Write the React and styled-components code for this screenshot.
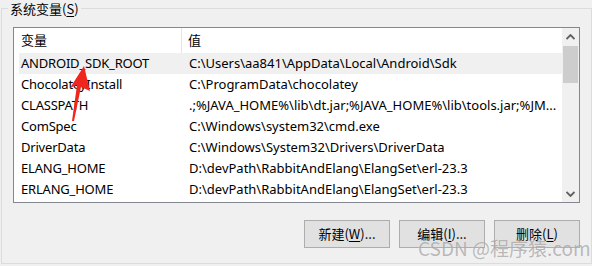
import React from "react";
import styled, { createGlobalStyle } from "styled-components";

const Global = createGlobalStyle`
  html, body { margin: 0; padding: 0; background: #f0f0f0; }
  body {
    width: 592px; height: 266px; overflow: hidden;
    font-family: "Noto Sans", "Noto Sans CJK SC", sans-serif;
    font-size: 13px; color: #000;
  }
`;

const Page = styled.div`
  position: relative;
  width: 592px;
  height: 266px;
  padding: 8px 0 0 1px;
  box-sizing: border-box;
`;

const Group = styled.div`
  position: relative;
  width: 591px;
  height: 256px;
  box-sizing: border-box;
  border: 1px solid #dcdcdc;
  padding: 18px 11px 0 11px;
  display: flex;
  flex-direction: column;
`;

const Legend = styled.div`
  position: absolute;
  left: 6px;
  top: -9px;
  padding: 0 2px;
  background: #f0f0f0;
  line-height: 17px;
  font-family: "Noto Sans CJK SC", sans-serif;
`;

const U = styled.span`
  text-decoration: underline;
  text-underline-offset: 2px;
`;

const ListBox = styled.div`
  height: 176px;
  box-sizing: border-box;
  border: 1px solid #828790;
  background: #fff;
  display: flex;
  overflow: hidden;
`;

const Content = styled.div`
  flex: 1;
  padding-left: 5px;
  display: flex;
  flex-direction: column;
  overflow: hidden;
`;

const HeaderRow = styled.div`
  height: 25px;
  flex: none;
  display: grid;
  grid-template-columns: 163px 1fr;
`;

const HeaderCell = styled.div`
  display: flex;
  align-items: center;
  padding-left: ${(p) => p.$pad}px;
  padding-bottom: 3px;
  border-right: ${(p) => (p.$divider ? "1px solid #e5e5e5" : "none")};
  font-family: "Noto Sans CJK SC", sans-serif;
`;

const Row = styled.div`
  height: 21px;
  flex: none;
  display: grid;
  grid-template-columns: 164px 1fr;
  background: ${(p) => (p.$selected ? "#f0f0f0" : "transparent")};
`;

const Cell = styled.div`
  display: flex;
  align-items: center;
  padding-left: ${(p) => p.$pad}px;
  padding-bottom: 1px;
  white-space: nowrap;
  overflow: hidden;
  letter-spacing: ${(p) => p.$ls || 0}px;
`;

const Scrollbar = styled.div`
  width: 17px;
  flex: none;
  background: #f0f0f0;
  display: flex;
  flex-direction: column;
  align-items: center;
`;

const ArrowBtn = styled.div`
  height: 17px;
  width: 17px;
  flex: none;
  display: flex;
  align-items: center;
  justify-content: center;
`;

const Thumb = styled.div`
  width: 15px;
  height: 37px;
  margin-top: 1px;
  background: #cdcdcd;
`;

const Track = styled.div`
  flex: 1;
`;

const Buttons = styled.div`
  display: flex;
  justify-content: flex-end;
  gap: 9px;
  margin-top: 17px;
`;

const Button = styled.div`
  width: 86px;
  height: 28px;
  box-sizing: border-box;
  border: 1px solid #adadad;
  background: #e1e1e1;
  display: flex;
  align-items: center;
  justify-content: center;
  font-family: "Noto Sans CJK SC", sans-serif;
  padding-bottom: 1px;
`;

const Watermark = styled.div`
  position: absolute;
  left: 418px;
  top: 234px;
  font-family: "Noto Sans CJK SC", sans-serif;
  font-size: 19px;
  color: rgba(120, 120, 120, 0.5);
  text-shadow: 0 0 1px rgba(255,255,255,0.6);
  white-space: nowrap;
  pointer-events: none;
`;

const Overlay = styled.svg`
  position: absolute;
  left: 0;
  top: 0;
  pointer-events: none;
`;

const rows = [
  ["ANDROID_SDK_ROOT", "C:\\Users\\aa841\\AppData\\Local\\Android\\Sdk"],
  ["ChocolateyInstall", "C:\\ProgramData\\chocolatey"],
  ["CLASSPATH", ".;%JAVA_HOME%\\lib\\dt.jar;%JAVA_HOME%\\lib\\tools.jar;%JM..."],
  ["ComSpec", "C:\\Windows\\system32\\cmd.exe"],
  ["DriverData", "C:\\Windows\\System32\\Drivers\\DriverData"],
  ["ELANG_HOME", "D:\\devPath\\RabbitAndElang\\ElangSet\\erl-23.3"],
  ["ERLANG_HOME", "D:\\devPath\\RabbitAndElang\\ElangSet\\erl-23.3"],
];

const Chevron = ({ up }) => (
  <svg width="9" height="6" viewBox="0 0 9 6">
    <path
      d={up ? "M0.5 5 L4.5 1 L8.5 5" : "M0.5 1 L4.5 5 L8.5 1"}
      fill="none"
      stroke="#606060"
      strokeWidth="1.8"
    />
  </svg>
);

export default function App() {
  return (
    <>
      <Global />
      <Page>
        <Group>
          <Legend>
            系统变量(<U>S</U>)
          </Legend>
          <ListBox>
            <Content>
              <HeaderRow>
                <HeaderCell $pad={2} $divider>变量</HeaderCell>
                <HeaderCell $pad={6}>值</HeaderCell>
              </HeaderRow>
              {rows.map(([k, v], i) => (
                <Row key={k} $selected={i === 0}>
                  <Cell $pad={2} $ls={-0.2}>{k}</Cell>
                  <Cell $pad={6}>{v}</Cell>
                </Row>
              ))}
            </Content>
            <Scrollbar>
              <ArrowBtn>
                <Chevron up />
              </ArrowBtn>
              <Thumb />
              <Track />
              <ArrowBtn>
                <Chevron />
              </ArrowBtn>
            </Scrollbar>
          </ListBox>
          <Buttons>
            <Button>
              新建(<U>W</U>)...
            </Button>
            <Button>
              编辑(<U>I</U>)...
            </Button>
            <Button>
              删除(<U>L</U>)
            </Button>
          </Buttons>
        </Group>
        <Watermark>CSDN @程序猿.com</Watermark>
        <Overlay width="592" height="266" viewBox="0 0 592 266">
          <polygon
            points="84,66 90,91 81,87 74,121 72,121 77,85 70,88"
            fill="#f0261e"
          />
        </Overlay>
      </Page>
    </>
  );
}
